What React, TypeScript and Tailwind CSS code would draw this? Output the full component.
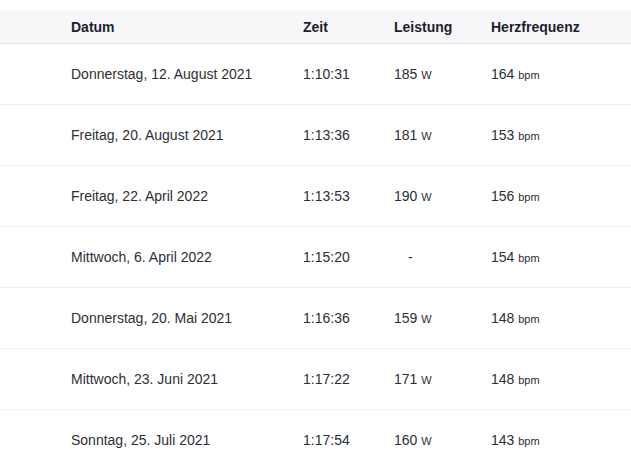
import React from "react";

type Ride = {
  date: string;
  time: string;
  watts: number | null;
  bpm: number;
};

const rides: Ride[] = [
  { date: "Donnerstag, 12. August 2021", time: "1:10:31", watts: 185, bpm: 164 },
  { date: "Freitag, 20. August 2021", time: "1:13:36", watts: 181, bpm: 153 },
  { date: "Freitag, 22. April 2022", time: "1:13:53", watts: 190, bpm: 156 },
  { date: "Mittwoch, 6. April 2022", time: "1:15:20", watts: null, bpm: 154 },
  { date: "Donnerstag, 20. Mai 2021", time: "1:16:36", watts: 159, bpm: 148 },
  { date: "Mittwoch, 23. Juni 2021", time: "1:17:22", watts: 171, bpm: 148 },
  { date: "Sonntag, 25. Juli 2021", time: "1:17:54", watts: 160, bpm: 143 },
];

const cols = "grid grid-cols-[232px_91px_97px_1fr] pl-[71px] items-center";

const App: React.FC = () => {
  return (
    <div className="w-[631px] h-[455px] overflow-hidden bg-white font-['Liberation_Sans',Arial,sans-serif] text-[14px]">
      <div className="pt-[11px]">
        {/* header */}
        <div className={`${cols} h-[33px] bg-[#f7f7f9] border-b border-[#e2e1e8] font-bold text-[#1e1e2c]`}>
          <div>Datum</div>
          <div>Zeit</div>
          <div>Leistung</div>
          <div>Herzfrequenz</div>
        </div>

        {rides.map((r, i) => (
          <div
            key={i}
            className={`${cols} h-[61px] border-b border-[#efeff1] text-[#2e2e36]`}
          >
            <div>{r.date}</div>
            <div>{r.time}</div>
            <div>
              {r.watts === null ? (
                <span className="pl-[14px]">-</span>
              ) : (
                <>
                  {r.watts} <span className="text-[11px]">W</span>
                </>
              )}
            </div>
            <div>
              {r.bpm} <span className="text-[11px]">bpm</span>
            </div>
          </div>
        ))}
      </div>
    </div>
  );
};

export default App;
